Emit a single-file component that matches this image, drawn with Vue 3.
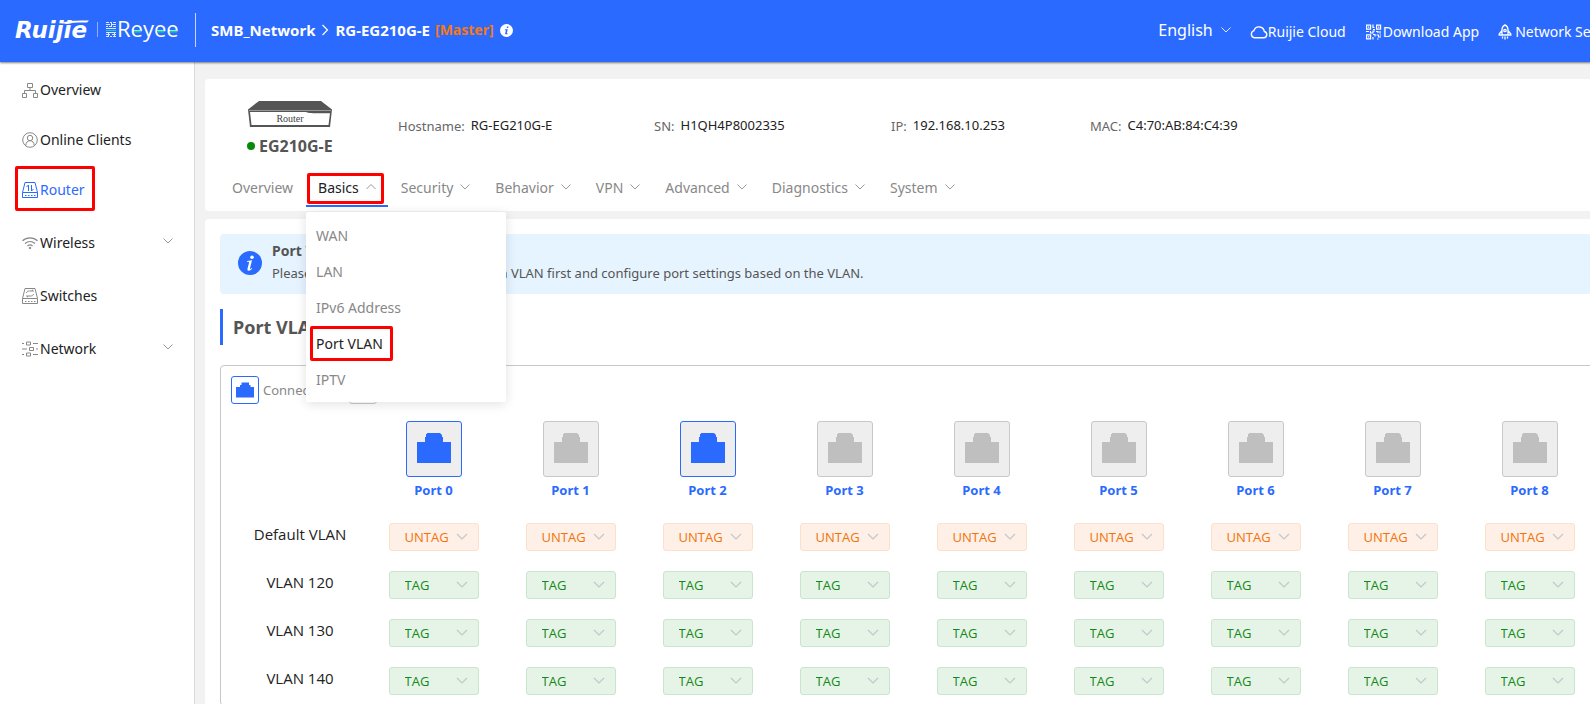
<script setup>
import { ref } from 'vue'

const mainNav = [
  { label: 'Overview', icon: 'topology' },
  { label: 'Online Clients', icon: 'user' },
  { label: 'Router', icon: 'router', active: true },
]
const subNav = [
  { label: 'Wireless', icon: 'wifi', expandable: true },
  { label: 'Switches', icon: 'switch' },
  { label: 'Network', icon: 'sliders', expandable: true },
]
const facts = [
  { label: 'Hostname:', value: 'RG-EG210G-E' },
  { label: 'SN:', value: 'H1QH4P8002335' },
  { label: 'IP:', value: '192.168.10.253' },
  { label: 'MAC:', value: 'C4:70:AB:84:C4:39' },
]
const tabs = ['Overview', 'Basics', 'Security', 'Behavior', 'VPN', 'Advanced', 'Diagnostics', 'System']
const menu = ['WAN', 'LAN', 'IPv6 Address', 'Port VLAN', 'IPTV']

const ports = Array.from({ length: 9 }, (_, i) => ({ name: `Port ${i}`, up: i === 0 || i === 2 }))
const rows = ref(
  ['Default VLAN', 'VLAN 120', 'VLAN 130', 'VLAN 140'].map((name, i) => ({
    name,
    modes: ports.map(() => (i === 0 ? 'UNTAG' : 'TAG')),
  }))
)
</script>

<template>
  <div class="page">
    <header class="topbar">
      <svg class="logo" width="170" height="34" viewBox="0 0 170 34" role="img" aria-label="Ruijie Reyee">
        <text x="0" y="25" class="logo-ruijie">Ruijie</text>
        <path d="M46 10C54 7.500 62 7.500 74 7.500L72 9.500C64 9.300 58 9.500 52 11Z" fill="#fff" />
        <path d="M82.500 9v15" stroke="#8fb0ff" />
        <g fill="none" stroke="#dbe6ff" stroke-width="1">
          <path d="M91 9.500h3M95 9.500h2M98 9.500h3M91 11.500h4M97 11.500h4M91 13.500h2M94 13.500h3M98 13.500h3M91 15.500h10M91 19.500h10M91 21.500h4M97 21.500h4M91 23.500h3M95 23.500h2M98 23.500h3M96.500 9v4M93.500 19v5M99.500 19v5" />
          <path d="M91 17.500h10" stroke="#1fd0b5" />
        </g>
        <text x="102" y="24" class="logo-reyee">Reyee</text>
        <path d="M119 18.500h7M142 18.500h7M155 18.500h7" stroke="#14cfa8" stroke-width="2" />
      </svg>
      <nav class="crumbs" aria-label="Breadcrumb">
        <a href="#">SMB_Network</a>
        <svg class="crumb-sep" width="8" height="12" viewBox="0 0 8 12"><path d="M1.500 1l5 5-5 5" fill="none" stroke="#fff" stroke-width="1.200" /></svg>
        <a href="#">RG-EG210G-E</a>
        <span class="master">[Master]</span>
        <svg width="13" height="13" viewBox="0 0 13 13"><circle cx="6.500" cy="6.500" r="6.500" fill="#fff" /><path d="M7 2.500h1.500l-.4 1.500H6.600zM5 5.300h2.800L6.800 9.300h.9l-.3 1H5l.9-4H4.800z" fill="#2b6aff" /></svg>
      </nav>
      <nav class="tools" aria-label="Tools">
        <button type="button" class="lang">English
          <svg width="10" height="6" viewBox="0 0 10 6"><path d="M.5.5L5 5 9.500.5" fill="none" stroke="#dfe8ff" /></svg>
        </button>
        <a href="#">
          <svg width="18" height="16" viewBox="0 0 18 16"><path d="M4.500 13.800h9.300a3.200 3.200 0 0 0 .5-6.300 5.300 5.300 0 0 0-10.300-.9A3.700 3.700 0 0 0 4.500 13.800z" fill="none" stroke="#fff" stroke-width="1.400" /></svg>
          Ruijie Cloud
        </a>
        <a href="#">
          <svg width="18" height="16" viewBox="0 0 18 16"><g fill="none" stroke="#fff" stroke-width="1.200"><path d="M1.600 1.100h4v4h-4zM11.600 1.100h4v4h-4zM1.600 10.900h4v4h-4z" /><path d="M8 .5v3h1.500M8 5.500h2M1 7.500h3M5.500 7v2H8V7h2M11 7.500h2v1.500M15 7v2.500M8 10.500h2v2M8 13v2.500M11.500 11h2v2h2.500M12 15h1.500M15.500 10.500v1" /></g><path d="M3 2.500h1.300v1.300H3zM13 2.500h1.300v1.300H13zM3 12.300h1.300v1.300H3z" fill="#fff" /></svg>
          Download App
        </a>
        <a href="#">
          <svg class="rocket" width="14" height="16" viewBox="0 0 14 16"><g fill="none" stroke="#fff" stroke-width="1.300"><path d="M4 11V5.500C4 3.500 5.500 1.800 7 .9c1.500.9 3 2.600 3 4.600V11zM4 6.500L1.200 10v1H4M10 6.500l2.800 3.500v1H10M4.500 12.500v2M7 12.500v3M9.500 12.500v2" /><circle cx="7" cy="6.500" r="1.200" /></g></svg>
          Network Setup
        </a>
      </nav>
    </header>

    <div class="body">
      <aside class="sidebar">
        <ul v-for="(group, g) in [mainNav, subNav]" :key="g" :class="{ roomy: g === 1 }">
          <li v-for="item in group" :key="item.label">
            <a href="#" :class="{ active: item.active }">
              <svg width="16" height="16" viewBox="0 0 16 16" fill="none" stroke="currentColor">
                <g v-if="item.icon === 'topology'"><path d="M5.500 1.500h5v4h-5zM.5 11.500h4v4h-4zM11.500 11.500h4v4h-4zM8 5.500v3M2.500 11.500v-3h11v3" /></g>
                <g v-else-if="item.icon === 'user'"><circle cx="8" cy="8" r="7.300" /><circle cx="8" cy="6" r="2.700" /><path d="M3.800 13.500c0-3 1.800-4.800 4.200-4.800s4.200 1.800 4.200 4.800" /></g>
                <g v-else-if="item.icon === 'router'"><path d="M3 .5h10l2.500 10v5H.5v-5zM.5 10.500h15M6.500 9V3L4.500 5M9.500 3v6l2-2M3 13.500h1.500M6 13.500h1.500M9 13.500h1.500M12 13.500h1.500" /></g>
                <g v-else-if="item.icon === 'wifi'"><path d="M.5 5.800c4.200-4 10.800-4 15 0M3 8.500c3-2.700 7-2.700 10 0M5.500 11c1.500-1.300 3.500-1.300 5 0" stroke-width="1.200" /><circle cx="8" cy="13" r=".8" fill="currentColor" /></g>
                <g v-else-if="item.icon === 'switch'"><path d="M3 .5h10l2.500 10v5H.5v-5zM.5 10.500h15M4.500 5c0-1.500 1.500-2 3-2h4L10 1.800M11.500 6c0 1.500-1.500 2-3 2h-4L6 9.200M3 13.500h1.500M6 13.500h1.500M9 13.500h1.500M12 13.500h1.500" /></g>
                <g v-else><path d="M0 2.500h2M4.500 1h4v3h-4zM11 2.500h5M0 8h5M7.500 6.500h4v3h-4zM14 8h2M0 13.500h2M4.500 12h4v3h-4zM11 13.500h5" /></g>
              </svg>
              {{ item.label }}
              <svg v-if="item.expandable" class="fold" width="10" height="6" viewBox="0 0 10 6"><path d="M.5.5L5 5 9.500.5" fill="none" stroke="#999" /></svg>
              <span v-if="item.active" class="mark mark-side"></span>
            </a>
          </li>
        </ul>
      </aside>

      <main class="content">
        <section class="card device-card">
          <div class="summary">
            <div class="device">
              <svg width="84" height="27" viewBox="0 0 84 27">
                <path d="M11 0h62l11 8.500-2 17.500H2L0 8.500z" fill="#555" />
                <path d="M1 9.500h82" stroke="#999" />
                <path d="M2 11h56c4 1.600 10 1.300 24 1.300L80.500 24h-77z" fill="#fff" />
                <text x="42" y="21" text-anchor="middle" class="device-text">Router</text>
              </svg>
              <strong><i class="dot"></i>EG210G-E</strong>
            </div>
            <dl class="facts">
              <div v-for="f in facts" :key="f.label"><dt>{{ f.label }}</dt><dd>{{ f.value }}</dd></div>
            </dl>
          </div>
          <ul class="tabs">
            <li v-for="(t, i) in tabs" :key="t" :class="{ open: t === 'Basics' }">
              <a href="#">{{ t }}
                <svg v-if="i > 0" width="10" height="6" viewBox="0 0 10 6"><path :d="t === 'Basics' ? 'M.5 5L5 .5 9.500 5' : 'M.5.5L5 5 9.500.5'" fill="none" stroke="#999" /></svg>
              </a>
              <template v-if="t === 'Basics'">
                <span class="mark mark-tab"></span>
                <ul class="menu">
                  <li v-for="m in menu" :key="m" :class="{ current: m === 'Port VLAN' }">
                    <a href="#">{{ m }}</a>
                    <span v-if="m === 'Port VLAN'" class="mark mark-menu"></span>
                  </li>
                </ul>
              </template>
            </li>
          </ul>
        </section>

        <section class="card vlan-card">
          <div class="notice">
            <svg width="24" height="24" viewBox="0 0 24 24"><circle cx="12" cy="12" r="12" fill="#2b6aff" /><circle cx="14" cy="6.300" r="1.800" fill="#fff" /><path d="M9 10l5-.7-2 8c-.2 1 .5.8 1.700-.3l.5.6c-2.600 3-5.300 2.700-4.700.2l1.600-6.300c.1-.6-.8-.7-2.200-.7z" fill="#fff" /></svg>
            <div>
              <strong>Port VLAN</strong>
              <p>Please choose LAN Settings to create a VLAN first and configure port settings based on the VLAN.</p>
            </div>
          </div>
          <h2>Port VLAN</h2>
          <div class="panel">
            <div class="legend">
              <span class="key up"><svg width="18" height="16" viewBox="0 0 36 30"><path d="M0 9h8V5h3V0h15v5h3v4h7v21H0z" fill="currentColor" /></svg></span>
              <span class="key-label">Connected</span>
              <span class="key"><svg width="18" height="16" viewBox="0 0 36 30"><path d="M0 9h8V5h3V0h15v5h3v4h7v21H0z" fill="currentColor" /></svg></span>
              <span class="key-label">Disconnected</span>
            </div>
            <table>
              <thead>
                <tr>
                  <td class="name-col"></td>
                  <th v-for="p in ports" :key="p.name" scope="col">
                    <span class="port" :class="{ up: p.up }"><svg width="34" height="30" viewBox="0 0 34 30"><path d="M0 9h8V4h1V1h1V0h13l2 2v2h1v5h8v21H0z" fill="currentColor" /></svg></span>
                    {{ p.name }}
                  </th>
                </tr>
              </thead>
              <tbody>
                <tr v-for="r in rows" :key="r.name">
                  <th scope="row">{{ r.name }}</th>
                  <td v-for="(p, i) in ports" :key="p.name">
                    <span class="pick" :class="r.modes[i].toLowerCase()">
                      <select v-model="r.modes[i]" :aria-label="`${r.name}, ${p.name}`">
                        <option>UNTAG</option>
                        <option>TAG</option>
                      </select>
                      <svg width="12" height="7" viewBox="0 0 12 7"><path d="M1 1l5 5 5-5" fill="none" stroke="#c4c6ca" stroke-width="1.200" /></svg>
                    </span>
                  </td>
                </tr>
              </tbody>
            </table>
          </div>
        </section>
      </main>
    </div>
  </div>
</template>

<style>
html,
body {
  height: 100%;
  overflow: hidden;
}
</style>

<style scoped>
.page {
  display: flex;
  flex-direction: column;
  min-width: 1640px;
  height: 100vh;
  overflow: hidden;
  background: #f2f2f2;
  color: #222;
  font: 14px/20px "Noto Sans", "Open Sans", sans-serif;
}
a {
  color: inherit;
  text-decoration: none;
}
ul,
dl,
dd,
p,
h2 {
  margin: 0;
  padding: 0;
  list-style: none;
}
svg {
  flex: none;
}
.mark {
  position: absolute;
  box-sizing: border-box;
  border: 3px solid #f00;
  border-radius: 2px;
  pointer-events: none;
}

.topbar {
  position: relative;
  z-index: 2;
  display: flex;
  align-items: center;
  flex: none;
  box-sizing: border-box;
  height: 62px;
  padding: 0 27px 2px 15px;
  background: #2b6aff;
  color: #fff;
  box-shadow: 0 1px 2px rgba(0, 0, 0, 0.5);
}
.logo-ruijie {
  fill: #fff;
  font: italic bold 23px "DejaVu Sans", sans-serif;
}
.logo-reyee {
  fill: #fff;
  font: 22px "Open Sans", sans-serif;
}
.crumbs {
  display: flex;
  align-items: center;
  margin-left: 10px;
  padding-left: 15px;
  border-left: 1px solid #c5d6ff;
  font-weight: 700;
  line-height: 34px;
}
.crumbs a {
  font-size: 15px;
}
.crumb-sep {
  margin: 0 6px;
}
.master {
  margin: 0 6px 0 5px;
  color: #f5780f;
}
.tools {
  display: flex;
  align-items: center;
  gap: 19px;
  margin-left: auto;
  white-space: nowrap;
}
.tools a {
  display: flex;
  align-items: center;
  padding-top: 3px;
}
.tools .rocket {
  margin-right: 3px;
}
.lang {
  display: flex;
  align-items: center;
  gap: 8px;
  padding: 0;
  border: 0;
  background: none;
  color: inherit;
  font: 16px/24px "Noto Sans", sans-serif;
}

.body {
  display: flex;
  flex: 1;
  min-height: 0;
}
.sidebar {
  flex: none;
  box-sizing: border-box;
  width: 195px;
  padding-top: 3px;
  border-right: 1px solid #d9d9d9;
  background: #fff;
}
.sidebar a {
  position: relative;
  display: flex;
  align-items: center;
  gap: 2px;
  height: 50px;
  padding: 0 21px 0 22px;
}
.sidebar svg {
  color: #888;
}
.roomy {
  padding-top: 1px;
}
.roomy a {
  height: 53px;
}
.sidebar .active,
.sidebar .active svg {
  color: #2b6aff;
}
.fold {
  margin: 0 0 4px auto;
}
.mark-side {
  top: 1px;
  left: 15px;
  width: 80px;
  height: 45px;
}

.content {
  flex: 1;
  min-width: 0;
  padding: 17px 10px 0;
}
.card {
  border-radius: 4px;
  background: #fff;
}
.device-card {
  position: relative;
  z-index: 1;
  height: 132px;
}
.summary {
  display: flex;
  height: 86px;
}
.device {
  display: flex;
  flex-direction: column;
  width: 193px;
  box-sizing: border-box;
  padding: 22px 0 0 43px;
  color: #555;
}
.device-text {
  fill: #444;
  font: 10px "Liberation Serif", serif;
}
.device strong {
  margin: 8px 0 0 -1px;
  font-size: 16px;
  white-space: nowrap;
}
.dot {
  display: inline-block;
  width: 8px;
  height: 8px;
  margin: 0 4px 2px 0;
  border-radius: 50%;
  background: #078a07;
}
.facts {
  display: grid;
  grid-template-columns: 256px 237px 199px auto;
  padding-top: 36px;
  font-size: 13px;
  white-space: nowrap;
}
.facts div {
  display: flex;
  gap: 6px;
}
.facts dt {
  padding-top: 1px;
  color: #666;
}
.tabs {
  display: flex;
  gap: 1px;
  padding-left: 15px;
}
.tabs > li {
  position: relative;
  color: #888;
}
.tabs > li > a {
  display: flex;
  align-items: center;
  gap: 7px;
  padding: 13px 12px 7px;
}
.tabs > .open > a {
  border-bottom: 2px solid #2b6aff;
  color: #222;
}
.tabs svg {
  margin-bottom: 2px;
}
.mark-tab {
  top: 8px;
  left: 1px;
  right: 4px;
  height: 31px;
}
.menu {
  position: absolute;
  top: 47px;
  left: 0;
  width: 200px;
  padding: 6px 0 4px;
  border-radius: 2px;
  background: #fff;
  box-shadow: 0 2px 12px rgba(0, 0, 0, 0.12);
}
.menu li {
  position: relative;
}
.menu a {
  display: block;
  padding: 0 10px;
  line-height: 36px;
}
.menu .current {
  color: #222;
}
.mark-menu {
  top: 0;
  left: 4px;
  width: 83px;
  height: 35px;
}

.vlan-card {
  margin-top: 8px;
  padding: 15px 15px 0;
}
.notice {
  display: flex;
  align-items: center;
  gap: 10px;
  box-sizing: border-box;
  height: 60px;
  padding: 0 0 2px 18px;
  border-radius: 4px;
  background: #e6f4ff;
  color: #555;
}
.notice div {
  padding-bottom: 2px;
}
.notice p {
  margin-top: 2px;
  font-size: 13px;
}
h2 {
  margin-top: 15px;
  padding-left: 10px;
  border-left: 3px solid #2b6aff;
  color: #555;
  font-size: 18px;
  line-height: 36px;
}
.panel {
  margin-top: 20px;
  padding: 10px 0 0 14px;
  border: 1px solid #c8c8c8;
  border-radius: 4px;
}
.legend {
  display: flex;
  align-items: center;
  margin-left: -4px;
  color: #888;
  font-size: 13px;
}
.key,
.port {
  display: flex;
  align-items: center;
  justify-content: center;
  box-sizing: border-box;
  border: 1px solid #c8c8c8;
  border-radius: 3px;
  color: #bfbfbf;
}
.key {
  width: 28px;
  height: 28px;
}
.key-label {
  margin: 0 20px 0 4px;
}
.port {
  width: 56px;
  height: 56px;
  margin: 0 auto 3px;
  padding-bottom: 3px;
  background: #eee;
}
.up {
  border-color: #2b6aff;
  color: #2b6aff;
}
table {
  width: 1363px;
  margin-top: 17px;
  border-collapse: collapse;
  table-layout: fixed;
}
.name-col {
  width: 130px;
}
td,
th {
  padding: 0;
  text-align: center;
}
thead th {
  height: 92px;
  color: #2b6aff;
  font-size: 13px;
  vertical-align: top;
}
tbody th {
  padding-bottom: 6px;
  font-family: "Open Sans", sans-serif;
  font-size: 15px;
  font-weight: 400;
}
tbody tr {
  height: 48px;
}
.pick {
  position: relative;
  display: block;
  width: 90px;
  margin: 0 auto;
}
.pick select {
  display: block;
  box-sizing: border-box;
  width: 100%;
  height: 28px;
  padding: 0 15px;
  border: 1px solid;
  border-radius: 3px;
  appearance: none;
  font: 13px "Open Sans", sans-serif;
}
.untag select {
  border-color: #fbe0cc;
  background: #fef0e6;
  color: #f2730c;
}
.tag select {
  border-color: #c9e5cb;
  background: #e6f3e7;
  color: #128a18;
}
.pick svg {
  position: absolute;
  top: 10px;
  right: 11px;
  pointer-events: none;
}
</style>
